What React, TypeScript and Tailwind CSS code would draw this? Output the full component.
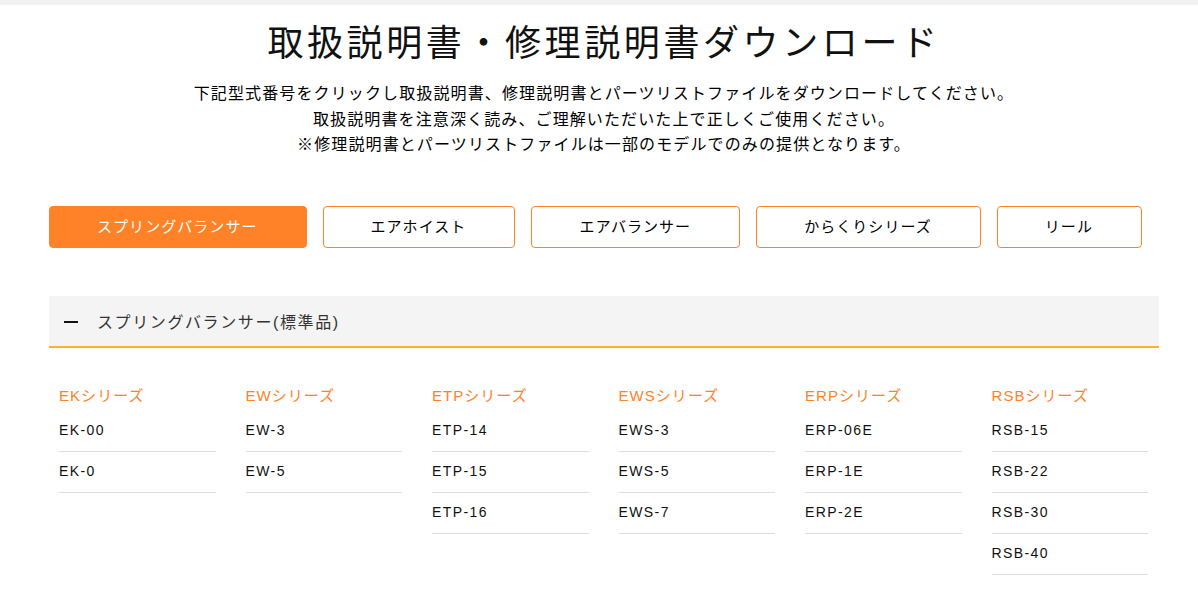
const tabs = ["スプリングバランサー", "エアホイスト", "エアバランサー", "からくりシリーズ", "リール"];

const series = [
  { name: "EKシリーズ", models: ["EK-00", "EK-0"] },
  { name: "EWシリーズ", models: ["EW-3", "EW-5"] },
  { name: "ETPシリーズ", models: ["ETP-14", "ETP-15", "ETP-16"] },
  { name: "EWSシリーズ", models: ["EWS-3", "EWS-5", "EWS-7"] },
  { name: "ERPシリーズ", models: ["ERP-06E", "ERP-1E", "ERP-2E"] },
  { name: "RSBシリーズ", models: ["RSB-15", "RSB-22", "RSB-30", "RSB-40"] },
];

export default function App() {
  return (
    <div className="border-t-5 border-[#f2f2f2] bg-white pr-[39px] pb-3.5 pl-[49px] font-['Liberation_Sans','Noto_Sans_CJK_JP',sans-serif] text-[#111]">
      <header className="pt-3.5 text-center">
        <h1 className="text-4xl leading-[50px] tracking-[0.1em]">取扱説明書・修理説明書ダウンロード</h1>
        <p className="mt-3 text-base leading-[1.6] tracking-[0.07em] text-black">
          下記型式番号をクリックし取扱説明書、修理説明書とパーツリストファイルをダウンロードしてください。
          <br />
          取扱説明書を注意深く読み、ご理解いただいた上で正しくご使用ください。
          <br />
          ※修理説明書とパーツリストファイルは一部のモデルでのみの提供となります。
        </p>
      </header>
      <main className="mt-12">
        <nav className="flex flex-wrap gap-4">
          {tabs.map((tab, i) => (
            <button
              key={tab}
              type="button"
              className={
                i === 0
                  ? "h-[42px] rounded border border-[#ff8228] bg-[#ff8228] pr-12 pl-[47px] text-[15px] tracking-[0.07em] text-white"
                  : "h-[42px] rounded border border-[#ff8228] bg-white pr-12 pl-[47px] text-[15px] tracking-[0.07em] text-black"
              }
            >
              {tab}
            </button>
          ))}
        </nav>
        <button
          type="button"
          aria-expanded="true"
          className="mt-12 flex h-[52px] w-full items-center gap-[19px] border-b-2 border-[#ffb22d] bg-[#f4f4f4] px-[15px] pt-0.5 text-left text-base tracking-[0.1em] text-[#333]"
        >
          <span className="h-0.5 w-3.5 bg-[#111]" />
          <span className="pt-0.5">スプリングバランサー(標準品)</span>
        </button>
        <div className="mt-[35px] grid grid-cols-6 gap-[30px] pr-[11px] pl-[10px]">
          {series.map((s) => (
            <section key={s.name}>
              <h2 className="text-[15px] leading-[26px] tracking-[0.07em] text-[#ff8228]">{s.name}</h2>
              <ul className="pt-0.5">
                {s.models.map((m) => (
                  <li key={m} className="border-b border-[#ddd]">
                    <a href="#" className="block pt-[7px] pb-[9px] text-sm leading-6 tracking-[0.1em]">{m}</a>
                  </li>
                ))}
              </ul>
            </section>
          ))}
        </div>
      </main>
    </div>
  );
}
